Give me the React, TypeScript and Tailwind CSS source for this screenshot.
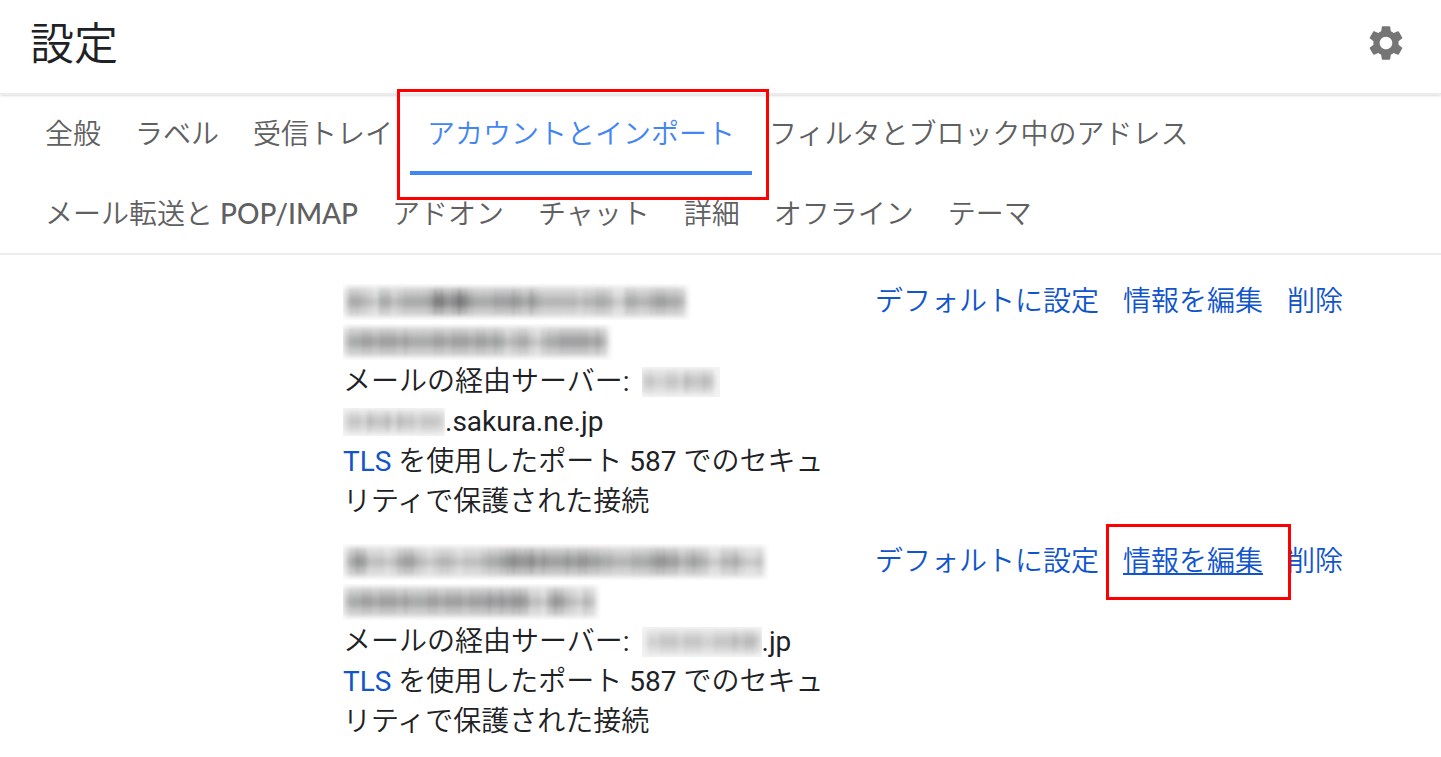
import React from "react";
import { MdSettings } from "react-icons/md";

const tabs = [
  [
    { label: "全般" },
    { label: "ラベル" },
    { label: "受信トレイ" },
    { label: "アカウントとインポート", active: true },
    { label: "フィルタとブロック中のアドレス" },
  ],
  [
    { label: "メール転送と", latin: "POP/IMAP" },
    { label: "アドオン" },
    { label: "チャット" },
    { label: "詳細" },
    { label: "オフライン" },
    { label: "テーマ" },
  ],
];

// every digit is the darkness of one 6px wide column
function Redacted({
  levels,
  height = 36,
  shade = false,
}: {
  levels: string;
  height?: number;
  shade?: boolean;
}) {
  const width = levels.length * 6;

  return (
    <svg
      width={width}
      height={height}
      viewBox={`0 0 ${width} ${height}`}
      className="shrink-0"
      aria-hidden="true"
    >
      {shade && <rect width={width} height={height} fill="#f5f5f5" />}
      <g className="blur-[3px]">
        <rect
          x="2"
          y={height * 0.08}
          width={width - 6}
          height={height * 0.84}
          fill="#202124"
          opacity={shade ? "0.06" : "0.14"}
        />
        <rect
          x="4"
          y={height * 0.4}
          width={width - 10}
          height={height * 0.2}
          fill="#202124"
          opacity={shade ? "0.08" : "0.15"}
        />
      </g>
      <g className="blur-[2px]">
        {levels.split("").map((level, i) => (
          <g key={i} fill="#202124" opacity={Number(level) / 14}>
            <rect
              x={i * 6 + 1}
              y={height * 0.12}
              width="3"
              height={height * 0.74}
            />
            <rect
              x={i * 6}
              y={height * 0.3}
              width="6"
              height={height * 0.35}
              opacity="0.7"
            />
          </g>
        ))}
      </g>
    </svg>
  );
}

function Tab({
  label,
  latin,
  active = false,
}: {
  label: string;
  latin?: string;
  active?: boolean;
}) {
  return (
    <div className="relative">
      <a
        href="#"
        className={`block px-[17px] pt-[18px] leading-[44px] ${
          active
            ? "h-20 border-b-4 border-[#4285f4] text-[#4285f4]"
            : "h-[78px] text-[#5f6061]"
        }`}
      >
        {label}
        {latin && (
          <span className="font-['Lato',sans-serif] leading-none font-medium">
            {" "}
            {latin}
          </span>
        )}
      </a>
      {active && (
        <div className="pointer-events-none absolute -top-[6px] -right-[17px] -left-[13px] h-[111px] border-[3px] border-[#ff0000]" />
      )}
    </div>
  );
}

function Server({ children }: { children: React.ReactNode }) {
  return (
    <div className="flex h-10 items-center">
      <p>
        メールの経由サーバー<span className="font-normal">:</span>
      </p>
      <div className="ml-3 flex items-center">{children}</div>
    </div>
  );
}

function Security() {
  return (
    <>
      <p>
        <a href="#" className="font-normal text-[#1155cc]">
          TLS
        </a>{" "}
        を使用したポート<span className="font-normal"> 587 </span>でのセキュ
      </p>
      <p>リティで保護された接続</p>
    </>
  );
}

function Actions({ marked = false }: { marked?: boolean }) {
  return (
    <div className="flex gap-6 text-[#1155cc]">
      <a href="#">デフォルトに設定</a>
      <div className="relative">
        <a
          href="#"
          className={marked ? "underline decoration-2 underline-offset-2" : ""}
        >
          情報を編集
        </a>
        {marked && (
          <div className="pointer-events-none absolute -top-[18px] -right-7 -left-[17px] h-[76px] border-[3px] border-[#ff0000]" />
        )}
      </div>
      <a href="#">削除</a>
    </div>
  );
}

export default function App() {
  return (
    <div className="min-h-screen bg-white font-['Roboto','Noto_Sans_CJK_JP',sans-serif] text-[28px] leading-10 font-[350] text-[#202124]">
      <header className="flex h-[95px] items-center justify-between border-b-2 border-[#ececec] px-[30px] pb-1 shadow-sm">
        <h1 className="text-[44px] leading-none">設定</h1>
        <button type="button" aria-label="設定" className="mr-1 mb-1">
          <MdSettings className="size-[42px] text-[#757575]" />
        </button>
      </header>

      <nav className="border-b-2 border-[#ececec] pl-7">
        {tabs.map((row, i) => (
          <div key={i} className="flex">
            {row.map((tab) => (
              <Tab key={tab.label} {...tab} />
            ))}
          </div>
        ))}
      </nav>

      <table className="mt-[17px] w-full table-fixed">
        <colgroup>
          <col className="w-[343px]" />
          <col className="w-[532px]" />
          <col />
        </colgroup>
        <tbody>
          <tr className="align-top">
            <td />
            <td className="py-[10px]">
              <div className="flex h-10 items-center">
                <Redacted levels="1332103312333347756864333444543532222221223320033223443320" />
              </div>
              <div className="flex h-10 items-center">
                <Redacted levels="233443444343333443444344343123310233444443420" />
              </div>
              <Server>
                <Redacted levels="2211221322320" height={30} shade />
              </Server>
              <div className="flex h-10 items-center">
                <Redacted levels="12213223132212222" height={28} shade />
                <span className="font-normal">.sakura.ne.jp</span>
              </div>
              <Security />
            </td>
            <td className="py-[10px]">
              <Actions />
            </td>
          </tr>
          <tr className="align-top">
            <td />
            <td className="py-[10px]">
              <div className="flex h-10 items-center">
                <Redacted levels="13541110134421012210111233456556454445455443322233345544234320022310010" />
              </div>
              <div className="flex h-10 items-center">
                <Redacted levels="2334434443433344344434445454554110354210210" />
              </div>
              <Server>
                <Redacted levels="01122212221122232332" height={30} shade />
                <span className="font-normal">.jp</span>
              </Server>
              <Security />
            </td>
            <td className="py-[10px]">
              <Actions marked />
            </td>
          </tr>
        </tbody>
      </table>
    </div>
  );
}
